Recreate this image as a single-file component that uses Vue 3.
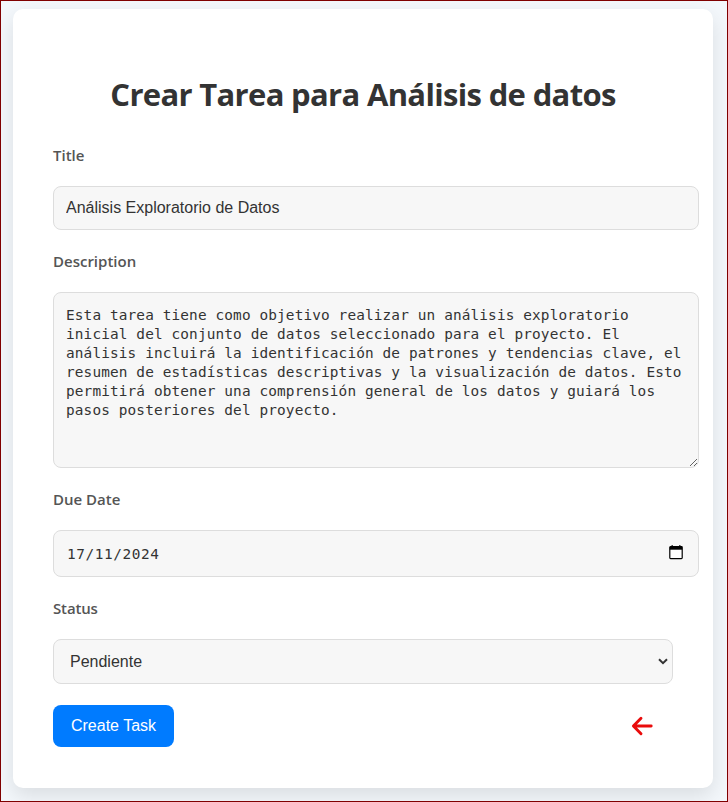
<script setup>
import { ref } from 'vue'

const title = ref('Análisis Exploratorio de Datos')
const description = ref(
  'Esta tarea tiene como objetivo realizar un análisis exploratorio inicial del conjunto de datos seleccionado para el proyecto. El análisis incluirá la identificación de patrones y tendencias clave, el resumen de estadísticas descriptivas y la visualización de datos. Esto permitirá obtener una comprensión general de los datos y guiará los pasos posteriores del proyecto.'
)
const dueDate = ref('17/11/2024')
const status = ref('Pendiente')
</script>

<template>
  <div class="page">
    <main class="card">
      <h1>Crear Tarea para Análisis de datos</h1>
      <form @submit.prevent>
        <label for="title" class="l-title">Title</label>
        <input id="title" v-model="title" class="control title-input" type="text" />

        <label for="description" class="l-desc">Description</label>
        <textarea id="description" v-model="description" class="control area" spellcheck="false"></textarea>

        <label for="due" class="l-due">Due Date</label>
        <div id="due" class="control date">
          <span>{{ dueDate }}</span>
          <svg width="14" height="15" viewBox="0 0 14 15">
            <path d="M2.6 0h1.1v2H2.6zM10.3 0h1.1v2h-1.1z" fill="#000" />
            <path d="M1.6 1.6h10.8a.8.8 0 0 1 .8.8v10.4a.8.8 0 0 1-.8.8H1.6a.8.8 0 0 1-.8-.8V2.4a.8.8 0 0 1 .8-.8z" fill="#fff" stroke="#000" stroke-width="1.2" />
            <path d="M.8 1.5h12.4v3.2H.8z" fill="#000" />
          </svg>
        </div>

        <label for="status" class="l-status">Status</label>
        <div class="select-wrap">
          <select id="status" v-model="status" class="control status">
            <option>Pendiente</option>
          </select>
          <svg class="chevron" width="10" height="7" viewBox="0 0 10 7">
            <path d="M1 1.2 5 5.1 9 1.2" fill="none" stroke="#333" stroke-width="2" />
          </svg>
        </div>

        <div class="actions">
          <button type="submit">Create Task</button>
          <a href="#" class="back" aria-label="Volver">
            <svg width="22" height="20" viewBox="0 0 22 20">
              <path d="M10 2.2 2.4 10l7.6 7.8M2.6 10h17.6" fill="none" stroke="#e90c0c" stroke-width="2.9" stroke-linecap="round" stroke-linejoin="round" />
            </svg>
          </a>
        </div>
      </form>
    </main>
  </div>
</template>

<style>
body {
  margin: 0;
}
</style>

<style scoped>
.page {
  box-sizing: border-box;
  width: 728px;
  height: 802px;
  padding: 8px 12px;
  border: 1px solid #800000;
  background: #f3f7fb;
  overflow: hidden;
}
.card {
  box-sizing: border-box;
  width: 700px;
  height: 779px;
  padding: 60px 40px 40px;
  border-radius: 10px;
  background: #fff;
  box-shadow: 0 8px 20px rgba(0, 0, 0, 0.1);
}
h1 {
  margin: 0;
  height: 50px;
  line-height: 50px;
  text-align: center;
  white-space: nowrap;
  font-family: "Open Sans", sans-serif;
  font-size: 31px;
  font-weight: 700;
  letter-spacing: -0.67px;
  color: #333;
}
form {
  display: flex;
  flex-direction: column;
  align-items: flex-start;
}
label {
  height: 22px;
  line-height: 22px;
  font-family: "Open Sans", sans-serif;
  font-size: 15px;
  font-weight: 600;
  color: #555;
}
.l-title {
  margin: 25px 0 20px;
}
.l-desc {
  margin: 20px 0;
}
.l-due {
  margin: 20px 0;
}
.l-status {
  margin: 20px 0;
  letter-spacing: -0.15px;
}
.control {
  box-sizing: border-box;
  width: 646px;
  margin: 0;
  padding: 12px;
  border: 1px solid #ddd;
  border-radius: 8px;
  outline: none;
  background: #f7f7f7;
  color: #333;
  font-family: "Liberation Sans", sans-serif;
  font-size: 16px;
}
.title-input {
  height: 44px;
}
.area {
  height: 176px;
  padding-top: 13px;
  font-family: "DejaVu Sans Mono", monospace;
  font-size: 14.4px;
  letter-spacing: 0.13px;
  line-height: 19px;
  overflow: hidden;
  resize: both;
}
.date {
  display: flex;
  align-items: center;
  justify-content: space-between;
  height: 47px;
  padding: 0 15px 2px 13px;
  font-family: "DejaVu Sans Mono", monospace;
  font-size: 14.4px;
  letter-spacing: 0.6px;
}
.date span {
  padding-top: 2px;
}
.select-wrap {
  position: relative;
  display: flex;
}
.status {
  width: 620px;
  height: 45px;
  padding: 0 16px;
  appearance: none;
}
.chevron {
  position: absolute;
  top: 19px;
  right: 5px;
  pointer-events: none;
}
.actions {
  display: flex;
  align-items: center;
  justify-content: space-between;
  width: 600px;
  margin-top: 21px;
}
button {
  width: 121px;
  height: 42px;
  padding: 0;
  border: 0;
  border-radius: 8px;
  background: #007bff;
  color: #fff;
  font-family: "Liberation Sans", sans-serif;
  font-size: 16px;
}
.back {
  display: flex;
}
</style>
